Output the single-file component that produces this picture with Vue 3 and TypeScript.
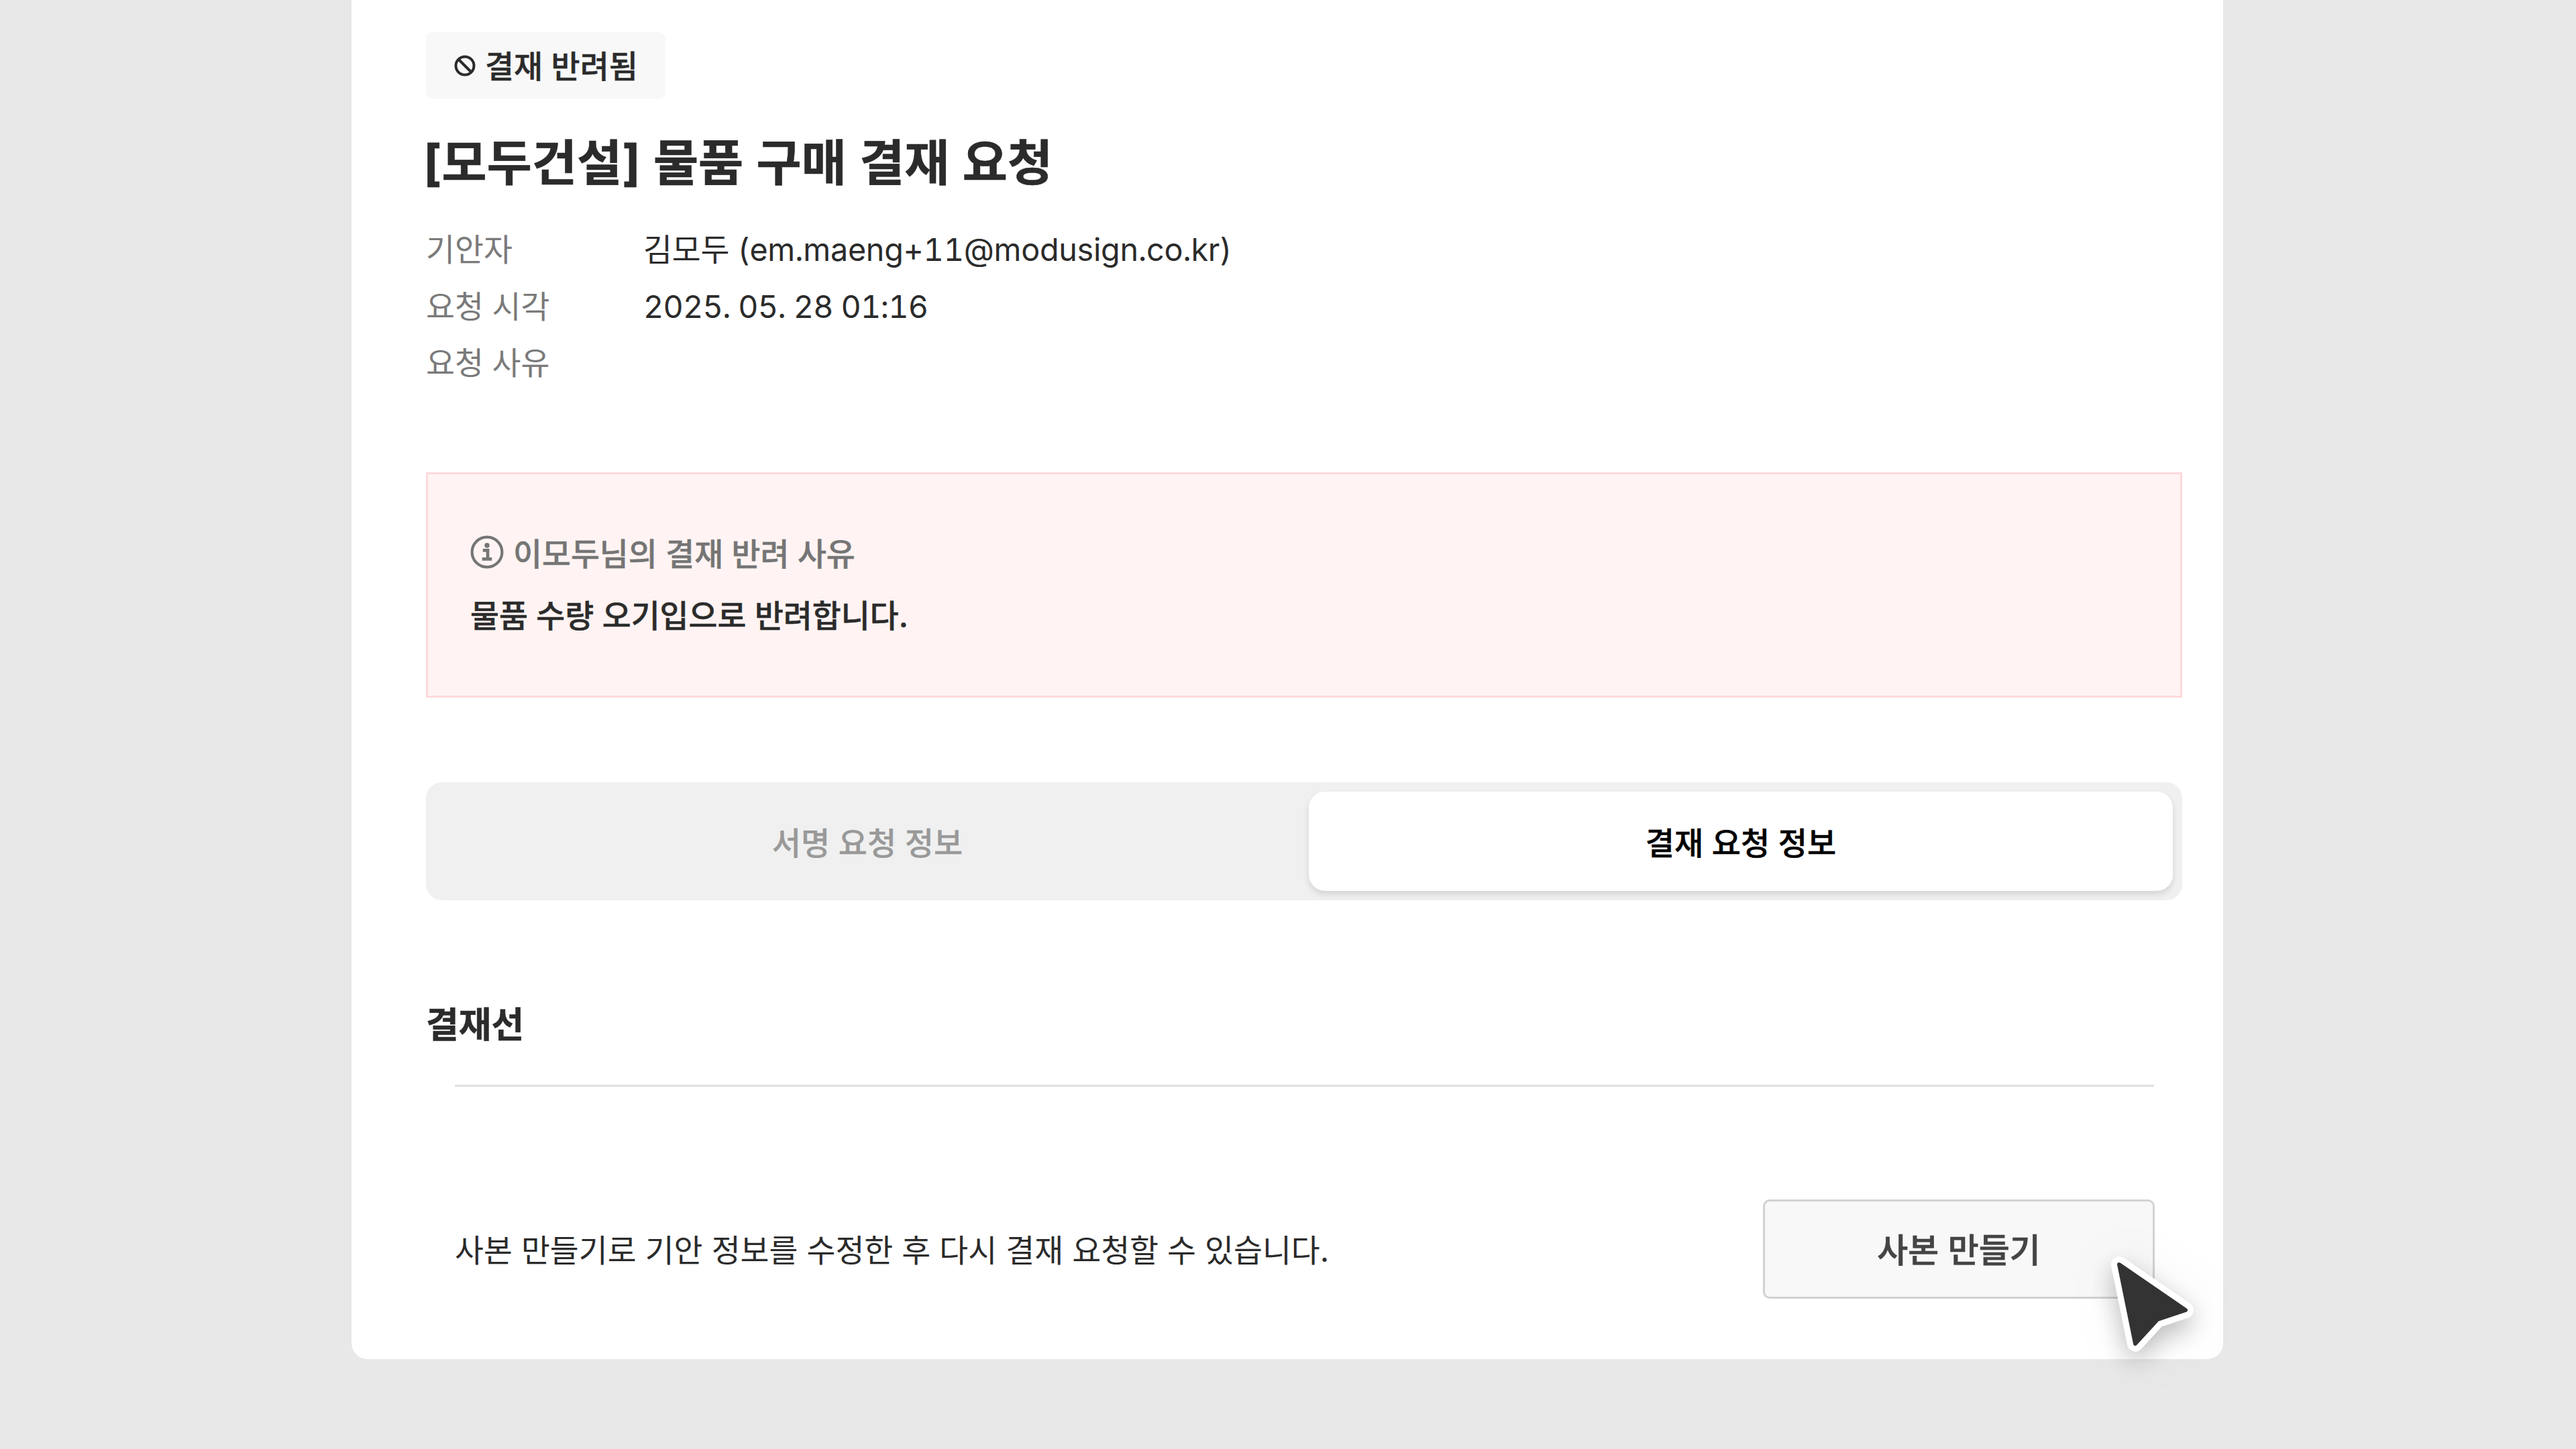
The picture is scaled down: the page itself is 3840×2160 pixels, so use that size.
<script setup lang="ts">
const metaRows: { label: string; value: string; kind: string }[] = [
  { label: '기안자', value: '김모두 (em.maeng+11@modusign.co.kr)', kind: 'email' },
  { label: '요청 시각', value: '2025. 05. 28 01:16', kind: 'date' },
  { label: '요청 사유', value: '', kind: 'reason' },
]
</script>

<template>
  <div class="page">
    <main class="card">
      <div class="content">
        <div class="badge">
          <svg class="badge-icon" viewBox="0 0 32 32" fill="none" stroke="#2b2b2b" stroke-width="4">
            <circle cx="16" cy="16" r="13.5" />
            <path d="M7 7l18 18" />
          </svg>
          <span>결재 반려됨</span>
        </div>
        <h1 class="title">[모두건설] 물품 구매 결재 요청</h1>
        <dl class="meta">
          <div v-for="row in metaRows" :key="row.label" class="meta-row">
            <dt>{{ row.label }}</dt>
            <dd :class="row.kind">{{ row.value }}</dd>
          </div>
        </dl>
        <section class="alert">
          <div class="alert-title">
            <svg class="info-icon" viewBox="0 0 48 48" fill="none" stroke="#757575">
              <circle cx="24" cy="24" r="21.5" stroke-width="4" />
              <path d="M18 21.5h7v12M17 34h14" stroke-width="4.5" />
              <circle cx="24" cy="14.5" r="3.6" fill="#757575" stroke="none" />
            </svg>
            <span>이모두님의 결재 반려 사유</span>
          </div>
          <p class="alert-text">물품 수량 오기입으로 반려합니다.</p>
        </section>
        <div class="tabs">
          <div class="tab">서명 요청 정보</div>
          <div class="tab active">결재 요청 정보</div>
        </div>
        <h2 class="heading">결재선</h2>
      </div>
      <div class="lower">
        <div class="divider"></div>
        <div class="footer">
          <p>사본 만들기로 기안 정보를 수정한 후 다시 결재 요청할 수 있습니다.</p>
          <button class="copy-btn" type="button">사본 만들기</button>
        </div>
      </div>
      <svg class="cursor" viewBox="0 0 170 190" width="170" height="190">
        <path class="cursor-outline" d="M29 25L128 93L86 107L53 143Z" />
        <path class="cursor-fill" d="M29 25L128 93L86 107L53 143Z" />
      </svg>
    </main>
  </div>
</template>

<style>
html,
body {
  margin: 0;
  background: #e8e8e8;
}
</style>

<style scoped>
.page {
  box-sizing: border-box;
  width: 3840px;
  height: 2160px;
  display: flex;
  justify-content: center;
  padding-right: 2px;
  background: #e8e8e8;
  overflow: hidden;
  font-family: Inter, "Noto Sans CJK KR", sans-serif;
  color: #2b2b2b;
}
.card {
  position: relative;
  box-sizing: border-box;
  width: 2790px;
  height: 2026px;
  padding-top: 48px;
  background: #fff;
  border-radius: 0 0 24px 24px;
}
.content {
  padding: 0 61px 0 111px;
}
.badge {
  box-sizing: border-box;
  display: inline-flex;
  align-items: center;
  gap: 14px;
  width: 357px;
  height: 99px;
  padding-left: 42px;
  background: #f8f8f8;
  border-radius: 10px;
  font-size: 46.8px;
  font-weight: 500;
  vertical-align: top;
}
.badge span {
  margin-top: -4px;
  -webkit-text-stroke: 0.5px #2b2b2b;
}
.badge-icon {
  width: 32px;
  height: 32px;
}
.title {
  margin: 43px 0 0 -4px;
  padding-top: 4px;
  font-size: 73px;
  line-height: 98px;
  font-weight: 700;
  word-spacing: 2px;
  -webkit-text-stroke: 0.6px #2b2b2b;
}
.meta {
  margin: 38px 0 0;
}
.meta-row {
  display: flex;
  height: 84.5px;
  line-height: 84.5px;
  font-size: 46.7px;
  font-variant-numeric: tabular-nums;
}
.meta-row dt {
  width: 324px;
  color: #7a7a7a;
}
.meta-row dd {
  margin: 0;
  color: #2b2b2b;
}
.meta-row dd.email {
  letter-spacing: -0.25px;
}
.meta-row dd.date {
  letter-spacing: -0.8px;
}
.alert {
  box-sizing: border-box;
  height: 336px;
  margin-top: 120px;
  padding: 76px 63px 0;
  background: #fff4f3;
  border: 3px solid #ffd9dc;
}
.alert-title {
  display: flex;
  align-items: center;
  gap: 14px;
  height: 80px;
  font-size: 46.7px;
  font-weight: 500;
  color: #757575;
  -webkit-text-stroke: 0.5px #757575;
}
.info-icon {
  width: 50px;
  height: 50px;
}
.alert-text {
  margin: 10px 0 0;
  line-height: 90px;
  font-size: 46.7px;
  font-weight: 500;
  -webkit-text-stroke: 0.5px #2b2b2b;
}
.tabs {
  box-sizing: border-box;
  display: grid;
  grid-template-columns: 1fr 1fr;
  gap: 14px;
  height: 176px;
  margin-top: 126px;
  padding: 14px;
  background: #f0f0f0;
  border-radius: 24px;
}
.tab {
  display: flex;
  align-items: center;
  justify-content: center;
  font-size: 47px;
  font-weight: 500;
  color: #999;
  border-radius: 24px;
  -webkit-text-stroke: 0.3px #999;
}
.tab.active {
  color: #000;
  background: #fff;
  box-shadow: 0 5px 10px rgba(0, 0, 0, 0.12);
  -webkit-text-stroke: 0.5px #000;
}
.heading {
  margin: 136px 0 0;
  font-size: 53px;
  line-height: 100px;
  font-weight: 700;
  -webkit-text-stroke: 0.5px #2b2b2b;
}
.lower {
  padding: 0 103px 0 154px;
}
.divider {
  height: 3px;
  margin-top: 39px;
  background: #e0e0e0;
}
.footer {
  display: flex;
  align-items: center;
  justify-content: space-between;
  margin: 168px -1px 0 0;
}
.footer p {
  margin: -3px 0 0;
  font-size: 46.65px;
}
.copy-btn {
  box-sizing: border-box;
  width: 584px;
  height: 148px;
  padding: 0 0 4px;
  background: #f8f8f8;
  border: 3px solid #d2d2d2;
  border-radius: 10px;
  font-family: inherit;
  font-size: 50px;
  font-weight: 500;
  color: #444;
  -webkit-text-stroke: 0.7px #444;
}
.cursor {
  position: absolute;
  left: 2606px;
  top: 1860px;
  overflow: visible;
  filter: drop-shadow(0 14px 18px rgba(0, 0, 0, 0.24)) drop-shadow(8px 6px 40px rgba(0, 0, 0, 0.05));
}
.cursor-outline {
  fill: #fff;
  stroke: #fff;
  stroke-width: 24;
  stroke-linejoin: round;
}
.cursor-fill {
  fill: #333;
  stroke: #333;
  stroke-width: 6;
  stroke-linejoin: round;
}
</style>
